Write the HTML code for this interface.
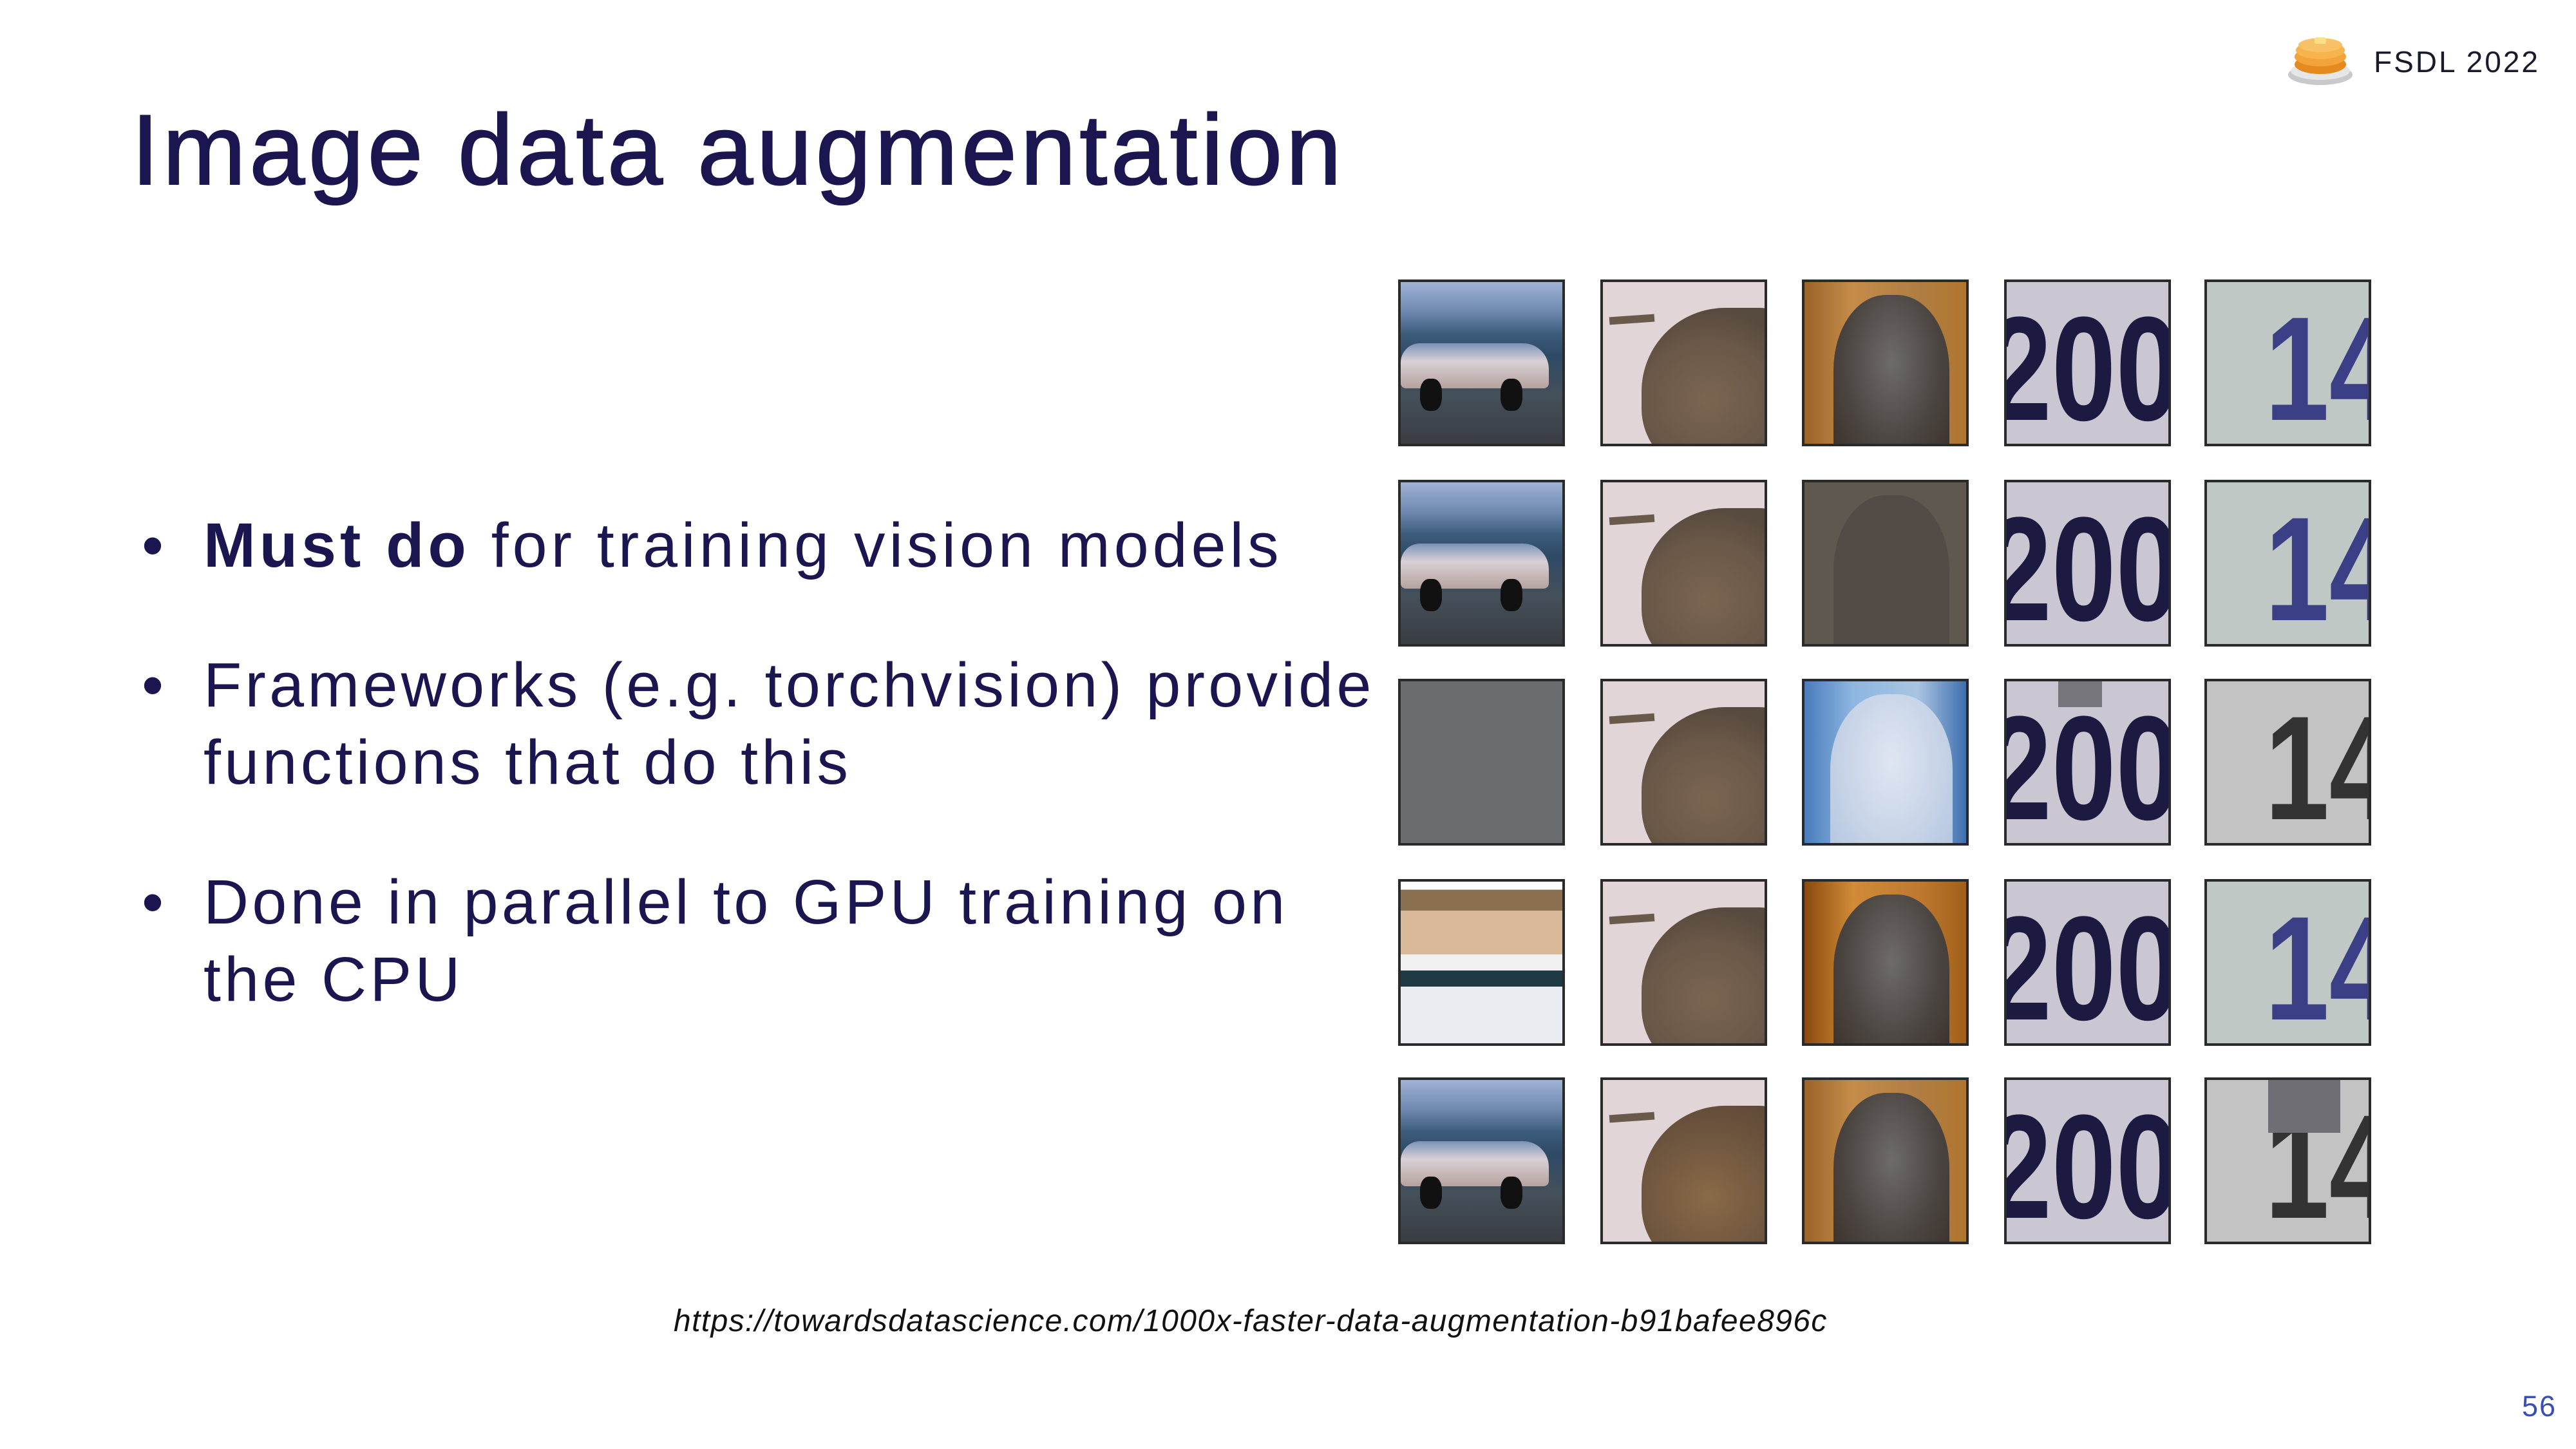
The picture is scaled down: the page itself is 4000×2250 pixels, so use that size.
<!DOCTYPE html>
<html><head><meta charset="utf-8"><style>
*{margin:0;padding:0;box-sizing:border-box}
body{width:4000px;height:2250px;background:#fff;position:relative;overflow:hidden;font-family:"Liberation Sans",sans-serif;color:#1b1650}
.t{position:absolute;white-space:nowrap;line-height:1}
.tile{position:absolute;width:259px;height:259px;border:4px solid #2a2a2a;overflow:hidden}
.car{background:linear-gradient(180deg,#9fb3d6 0%,#6f89b0 18%,#3d5d7c 32%,#2e4a66 45%,#44505a 70%,#3a3d42 100%)}
.car .body{position:absolute;left:0;top:95px;width:230px;height:70px;background:linear-gradient(180deg,#7a93b8,#d8d0d6 40%,#b6a29e);border-radius:30px 40px 8px 8px}
.car .w1,.car .w2{position:absolute;top:150px;width:34px;height:50px;background:#111;border-radius:40%}
.bird{background:#e2d5d8}
.bird .b{position:absolute;left:60px;top:40px;width:260px;height:260px;background:radial-gradient(ellipse at 40% 55%,#7a6550 0%,#6a5848 45%,#574a3e 70%);border-radius:50% 30% 0 40%}
.bird .beak{position:absolute;left:10px;top:52px;width:70px;height:12px;background:#6a5a4c;transform:rotate(-4deg)}
.cat{background:linear-gradient(90deg,#9b6428,#c58c4a 30%,#b07d42 70%,#b07630)}
.cat .c{position:absolute;left:45px;top:20px;width:180px;height:260px;background:radial-gradient(ellipse at 50% 40%,#6f6b6a,#4a4440 60%,#3a302a);border-radius:45% 45% 10% 10%}
.n20{background:#cac7d3}
.n14{background:#bfc8c5}
.num{position:absolute;font-size:230px;font-weight:bold;line-height:1;font-family:"Liberation Sans",sans-serif;transform:scaleX(0.78);transform-origin:left top}
.c1{left:2171px}.c2{left:2485px}.c3{left:2798px}.c4{left:3112px}.c5{left:3423px}
.r1{top:434px}.r2{top:745px}.r3{top:1054px}.r4{top:1365px}.r5{top:1673px}
</style></head><body>

<svg style="position:absolute;left:3550px;top:48px" width="106" height="90" viewBox="0 0 106 90">
<ellipse cx="53" cy="68" rx="50" ry="16" fill="#c9c9cc"/>
<ellipse cx="53" cy="62" rx="46" ry="14" fill="#e6e6e8"/>
<ellipse cx="53" cy="52" rx="40" ry="15" fill="#e48a1e"/>
<ellipse cx="53" cy="40" rx="40" ry="15" fill="#f2a33a"/>
<ellipse cx="53" cy="30" rx="38" ry="14" fill="#f6b34e"/>
<ellipse cx="53" cy="22" rx="34" ry="11" fill="#f8c168"/>
<rect x="44" y="10" width="18" height="10" rx="3" fill="#fbe08a"/>
</svg>
<div class="t" style="left:3686px;top:73px;font-size:46px;color:#1a1a2a;letter-spacing:3px">FSDL 2022</div>

<div class="t" style="left:204px;top:155px;font-size:155px;color:#1b1650;letter-spacing:5.5px;-webkit-text-stroke:2px #1b1650">Image data augmentation</div>

<div class="t" style="left:220px;top:798px;font-size:97px">•</div>
<div class="t" style="left:316px;top:798px;font-size:97px;letter-spacing:6px"><b>Must do</b> for training vision models</div>
<div class="t" style="left:220px;top:1015px;font-size:97px">•</div>
<div class="t" style="left:316px;top:1015px;font-size:97px;letter-spacing:5.3px">Frameworks (e.g. torchvision) provide</div>
<div class="t" style="left:316px;top:1135px;font-size:97px;letter-spacing:5.3px">functions that do this</div>
<div class="t" style="left:220px;top:1352px;font-size:97px">•</div>
<div class="t" style="left:316px;top:1352px;font-size:97px;letter-spacing:5.3px">Done in parallel to GPU training on</div>
<div class="t" style="left:316px;top:1472px;font-size:97px;letter-spacing:5.3px">the CPU</div>

<div class="tile car c1 r1"><div class="body"></div><div class="w1" style="left:30px"></div><div class="w2" style="left:155px"></div></div>
<div class="tile bird c2 r1"><div class="b"></div><div class="beak"></div></div>
<div class="tile cat c3 r1"><div class="c"></div></div>
<div class="tile n20 c4 r1"><div class="num" style="left:-30px;top:20px;color:#1c1a40">200</div></div>
<div class="tile n14 c5 r1"><div class="num" style="left:90px;top:20px;color:#3b3f86">14</div></div>

<div class="tile car c1 r2"><div class="body"></div><div class="w1" style="left:30px"></div><div class="w2" style="left:155px"></div></div>
<div class="tile bird c2 r2"><div class="b"></div><div class="beak"></div></div>
<div class="tile c3 r2" style="background:#5f584e"><div style="position:absolute;left:45px;top:20px;width:180px;height:260px;background:#534c46;border-radius:45% 45% 10% 10%"></div></div>
<div class="tile n20 c4 r2"><div class="num" style="left:-30px;top:20px;color:#1c1a40">200</div></div>
<div class="tile n14 c5 r2"><div class="num" style="left:90px;top:20px;color:#3b3f86">14</div></div>

<div class="tile c1 r3" style="background:#6a6c70"></div>
<div class="tile bird c2 r3"><div class="b"></div><div class="beak"></div></div>
<div class="tile c3 r3" style="background:linear-gradient(90deg,#4a7cbc,#8db6e0 30%,#a9c4e2 70%,#3f6fae)"><div style="position:absolute;left:40px;top:20px;width:190px;height:260px;background:radial-gradient(ellipse at 50% 40%,#dfe6f2,#c5d2e6 60%,#b0c4e0);border-radius:45% 45% 10% 10%"></div></div>
<div class="tile n20 c4 r3"><div class="num" style="left:-30px;top:20px;color:#1c1a40">200</div><div style="position:absolute;left:80px;top:0;width:68px;height:40px;background:#77767c"></div></div>
<div class="tile c5 r3" style="background:#c3c3c3"><div class="num" style="left:90px;top:20px;color:#333">14</div></div>

<div class="tile c1 r4" style="background:linear-gradient(180deg,#fff 0 5%,#8a7050 5% 18%,#d8b898 18% 45%,#f0f0f0 45% 55%,#1f3a44 55% 65%,#e8ecf0 65% 100%)"></div>
<div class="tile bird c2 r4"><div class="b"></div><div class="beak"></div></div>
<div class="tile cat c3 r4" style="background:linear-gradient(90deg,#8a4a10,#d08a38 30%,#c07a30 70%,#a0601a)"><div class="c"></div></div>
<div class="tile n20 c4 r4"><div class="num" style="left:-30px;top:20px;color:#1c1a40">200</div></div>
<div class="tile n14 c5 r4"><div class="num" style="left:90px;top:20px;color:#3b3f86">14</div></div>

<div class="tile car c1 r5"><div class="body"></div><div class="w1" style="left:30px"></div><div class="w2" style="left:155px"></div></div>
<div class="tile bird c2 r5"><div class="b" style="background:radial-gradient(ellipse at 40% 55%,#8a6a48,#6d553e 50%,#574234)"></div><div class="beak"></div></div>
<div class="tile cat c3 r5"><div class="c"></div></div>
<div class="tile n20 c4 r5"><div class="num" style="left:-30px;top:20px;color:#1c1a40">200</div></div>
<div class="tile c5 r5" style="background:#c3c3c3"><div class="num" style="left:90px;top:20px;color:#333">14</div><div style="position:absolute;left:95px;top:0;width:112px;height:82px;background:#6e6e74"></div></div>

<div class="t" style="left:1046px;top:2028px;font-size:48px;font-style:italic;color:#111;letter-spacing:1.4px">https://towardsdatascience.com/1000x-faster-data-augmentation-b91bafee896c</div>
<div class="t" style="left:3916px;top:2161px;font-size:45px;color:#3b4fb2;letter-spacing:2px">56</div>
</body></html>
